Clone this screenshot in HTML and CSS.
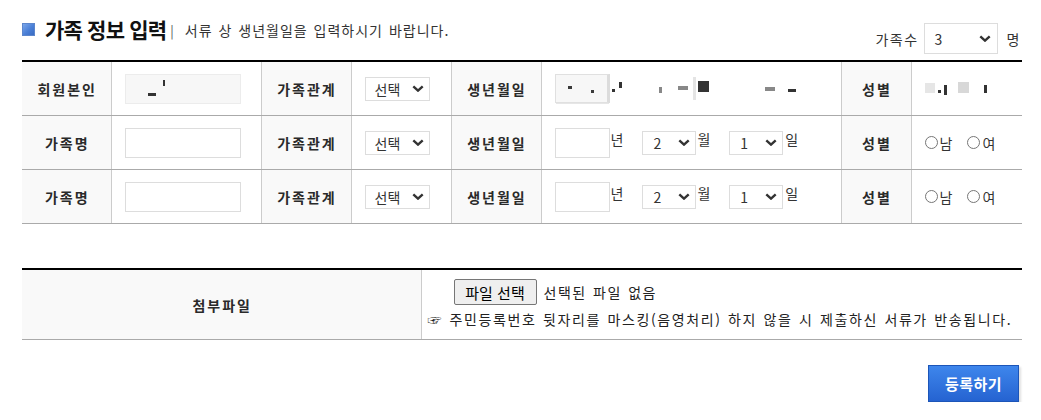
FILE: index.html
```html
<!DOCTYPE html>
<html lang="ko">
<head>
<meta charset="utf-8">
<title>가족 정보 입력</title>
<link rel="stylesheet" href="styles.css">
</head>
<body>
<div class="wrap">
  <div class="head">
    <h2 class="title">
      <span class="bullet"></span>
      <span class="title-text">가족 정보 입력</span>
      <span class="bar">|</span>
      <span class="sub">서류 상 생년월일을 입력하시기 바랍니다.</span>
    </h2>
    <div class="count">
      <span class="lbl">가족수</span>
      <span class="sel sel-count"><span>3</span><svg class="chev" width="12" height="7" viewBox="0 0 12 7"><polyline points="1.3,1.3 6,5.6 10.7,1.3" fill="none" stroke="#333" stroke-width="2.4"/></svg></span>
      <span class="lbl">명</span>
    </div>
  </div>

  <table class="fam">
    <colgroup>
      <col class="w89"><col class="w150"><col class="w90"><col class="w100"><col class="w90"><col class="w300"><col class="w70"><col class="w111">
    </colgroup>
    <tbody>
      <tr>
        <th>회원본인</th>
        <td><span class="inp inp-name ro"><i class="m m1"></i><i class="m m2"></i></span></td>
        <th>가족관계</th>
        <td><span class="sel sel-rel"><span>선택</span><svg class="chev" width="12" height="7" viewBox="0 0 12 7"><polyline points="1.3,1.3 6,5.6 10.7,1.3" fill="none" stroke="#333" stroke-width="2.4"/></svg></span></td>
        <th>생년월일</th>
        <td>
          <div class="redact">
            <span class="inp inp-year ro ro2"><i class="m m3"></i><i class="m m4"></i></span>
            <i class="m m5"></i><i class="m m6"></i>
            <i class="m m7"></i>
            <i class="m m8"></i><i class="m m9"></i><i class="m m10"></i>
            <i class="m m11"></i><i class="m m12"></i>
          </div>
        </td>
        <th>성별</th>
        <td>
          <div class="redact">
            <i class="m g1"></i><i class="m g2"></i><i class="m g3"></i><i class="m g4"></i><i class="m g5"></i>
          </div>
        </td>
      </tr>
      <tr>
        <th>가족명</th>
        <td><span class="inp inp-name"></span></td>
        <th>가족관계</th>
        <td><span class="sel sel-rel"><span>선택</span><svg class="chev" width="12" height="7" viewBox="0 0 12 7"><polyline points="1.3,1.3 6,5.6 10.7,1.3" fill="none" stroke="#333" stroke-width="2.4"/></svg></span></td>
        <th>생년월일</th>
        <td>
          <div class="birth">
            <span class="inp inp-year"></span><span class="unit">년</span>
            <span class="sel sel-date"><span>2</span><svg class="chev" width="12" height="7" viewBox="0 0 12 7"><polyline points="1.3,1.3 6,5.6 10.7,1.3" fill="none" stroke="#333" stroke-width="2.4"/></svg></span><span class="unit">월</span>
            <span class="sel sel-date"><span>1</span><svg class="chev" width="12" height="7" viewBox="0 0 12 7"><polyline points="1.3,1.3 6,5.6 10.7,1.3" fill="none" stroke="#333" stroke-width="2.4"/></svg></span><span class="unit">일</span>
          </div>
        </td>
        <th>성별</th>
        <td>
          <div class="gender">
            <span class="radio"></span><span class="rtxt">남</span>
            <span class="radio"></span><span class="rtxt">여</span>
          </div>
        </td>
      </tr>
      <tr>
        <th>가족명</th>
        <td><span class="inp inp-name"></span></td>
        <th>가족관계</th>
        <td><span class="sel sel-rel"><span>선택</span><svg class="chev" width="12" height="7" viewBox="0 0 12 7"><polyline points="1.3,1.3 6,5.6 10.7,1.3" fill="none" stroke="#333" stroke-width="2.4"/></svg></span></td>
        <th>생년월일</th>
        <td>
          <div class="birth">
            <span class="inp inp-year"></span><span class="unit">년</span>
            <span class="sel sel-date"><span>2</span><svg class="chev" width="12" height="7" viewBox="0 0 12 7"><polyline points="1.3,1.3 6,5.6 10.7,1.3" fill="none" stroke="#333" stroke-width="2.4"/></svg></span><span class="unit">월</span>
            <span class="sel sel-date"><span>1</span><svg class="chev" width="12" height="7" viewBox="0 0 12 7"><polyline points="1.3,1.3 6,5.6 10.7,1.3" fill="none" stroke="#333" stroke-width="2.4"/></svg></span><span class="unit">일</span>
          </div>
        </td>
        <th>성별</th>
        <td>
          <div class="gender">
            <span class="radio"></span><span class="rtxt">남</span>
            <span class="radio"></span><span class="rtxt">여</span>
          </div>
        </td>
      </tr>
    </tbody>
  </table>

  <table class="file">
    <colgroup><col class="w399"><col></colgroup>
    <tbody>
      <tr>
        <th>첨부파일</th>
        <td>
          <div class="file-line">
            <span class="file-btn">파일 선택</span>
            <span class="file-none">선택된 파일 없음</span>
          </div>
          <p class="note">☞ 주민등록번호 뒷자리를 마스킹(음영처리) 하지 않을 시 제출하신 서류가 반송됩니다.</p>
        </td>
      </tr>
    </tbody>
  </table>

  <div class="actions">
    <span class="btn-submit">등록하기</span>
  </div>
</div>
</body>
</html>
```

FILE: styles.css
```css
html, body {
  margin: 0;
  padding: 0;
  background: #fff;
}
body {
  font-family: "Noto Sans CJK KR", "Noto Sans", sans-serif;
  color: #333;
  font-size: 14px;
}
.wrap {
  width: 1000px;
  padding-left: 22px;
}

/* header */
.head {
  height: 60px;
  display: flex;
  justify-content: space-between;
}
.title {
  margin: 0;
  padding-top: 15px;
  display: flex;
  align-items: center;
  height: 28px;
  font-weight: normal;
}
.bullet {
  width: 13px;
  height: 13px;
  box-sizing: border-box;
  background: linear-gradient(135deg, #7aa6ea 0%, #4a7fd6 55%, #3a6bc2 100%);
  border: 1px solid #5c86cc;
  margin-right: 10px;
}
.title-text {
  font-size: 21px;
  font-weight: 700;
  color: #111;
  letter-spacing: -0.8px;
  line-height: 28px;
}
.bar {
  font-size: 13px;
  color: #555;
  margin: 3px 11px 0 4px;
}
.sub {
  font-size: 14px;
  color: #333;
  margin-top: 2px;
  letter-spacing: 1px;
  word-spacing: 1px;
}
.count {
  align-self: flex-end;
  margin-bottom: 6px;
  margin-right: 1px;
  display: flex;
  align-items: center;
}
.count .lbl {
  font-size: 14px;
  color: #333;
  letter-spacing: 1.5px;
}
.count .sel-count {
  margin: 0 9px 0 5px;
}

/* fake selects & inputs */
.sel {
  display: inline-flex;
  align-items: center;
  justify-content: space-between;
  box-sizing: border-box;
  border: 1px solid #ddd;
  background: #fff;
  font-size: 14px;
  color: #333;
  vertical-align: middle;
}
.chev {
  display: block;
}
.sel-rel {
  width: 65px;
  height: 24px;
  padding: 0 5px 0 9px;
}
.sel-date {
  width: 54px;
  height: 24px;
  padding: 0 5px 0 10px;
}
.sel-count {
  width: 74px;
  height: 31px;
  padding: 0 6px 0 10px;
}
.inp {
  display: inline-block;
  box-sizing: border-box;
  border: 1px solid #ddd;
  background: #fff;
  vertical-align: middle;
}
.inp-name {
  width: 116px;
  height: 30px;
}
.inp-year {
  width: 55px;
  height: 30px;
}
.ro {
  background: #f7f7f7;
  border-color: #ececec;
  display: inline-flex;
  align-items: center;
}
.ro2 {
  height: 29px;
  border: 1px solid #e0e0e0;
  border-right: 3px solid #dcdcdc;
  box-shadow: 0 2px 0 -1px #e6e6e6;
}

/* redaction marks */
.m {
  display: inline-block;
  background: #333;
}
.m1 { width: 8px; height: 3px; margin: 12px 0 0 22px; }
.m2 { width: 2px; height: 6px; margin: -12px 0 0 7px; }
.m3 { width: 4px; height: 3px; margin: -2px 0 0 12px; background: #3a3a3a; }
.m4 { width: 3px; height: 3px; margin: 6px 0 0 19px; background: #3a3a3a; }
.m5 { width: 3px; height: 3px; margin: 4px 0 0 2px; }
.m6 { width: 3px; height: 6px; margin: -8px 0 0 4px; }
.m7 { width: 3px; height: 6px; margin: 2px 0 0 37px; background: #888; }
.m8 { width: 10px; height: 4px; margin: -1px 0 0 16px; background: #888; }
.m9 { width: 3px; height: 23px; margin: 0 0 0 5px; background: #e4e4e4; }
.m10 { width: 11px; height: 11px; margin: -4px 0 0 2px; background: #333; }
.m11 { width: 10px; height: 4px; margin: 1px 0 0 56px; background: #888; }
.m12 { width: 8px; height: 3px; margin: 4px 0 0 13px; background: #333; }
.g1 { width: 10px; height: 10px; background: #e6e6e6; margin-top: -2px; }
.g2 { width: 3px; height: 3px; margin: 6px 0 0 3px; background: #333; }
.g3 { width: 3px; height: 10px; margin: 2px 0 0 3px; background: #333; }
.g4 { width: 11px; height: 11px; margin: -2px 0 0 11px; background: #d8d8d8; }
.g5 { width: 3px; height: 8px; margin: 0 0 0 15px; background: #333; }
.redact {
  display: flex;
  align-items: center;
}

/* table */
.fam,
.file {
  width: 1000px;
  table-layout: fixed;
  border-collapse: collapse;
  border-top: 2px solid #000;
}
.fam th,
.fam td,
.file th,
.file td {
  height: 53px;
  padding: 0;
  border-bottom: 1px solid #aaa;
  border-left: 1px solid #ccc;
  border-right: 1px solid #ccc;
}
.fam tr > :first-child,
.file tr > :first-child {
  border-left: 0;
}
.fam tr > :last-child,
.file tr > :last-child {
  border-right: 0;
}
.fam th,
.file th {
  background: #f9f9f9;
  font-size: 14px;
  font-weight: 700;
  color: #2a2a2a;
  letter-spacing: 2px;
  text-indent: 2px;
  text-align: center;
}
.fam td {
  padding-left: 13px;
  text-align: left;
}
.w89 { width: 89px; }
.w150 { width: 150px; }
.w90 { width: 90px; }
.w100 { width: 100px; }
.w70 { width: 70px; }
.w300 { width: 300px; }
.w111 { width: 111px; }
.w399 { width: 399px; }

.birth {
  display: flex;
  align-items: center;
}
.unit {
  font-size: 14px;
  color: #333;
  margin: -7px 19px 0 1px;
  line-height: 18px;
}
.unit:last-child {
  margin-right: 0;
  margin-left: 2px;
}

.gender {
  display: flex;
  align-items: center;
}
.radio {
  width: 13px;
  height: 13px;
  box-sizing: border-box;
  border: 1px solid #767676;
  border-radius: 50%;
  background: #fff;
}
.rtxt {
  font-size: 14px;
  color: #333;
  margin: 0 15px 0 2px;
}

/* file section */
.file {
  margin-top: 44px;
}
.file th,
.file td {
  height: 69px;
}
.file td {
  padding: 0 0 0 6px;
  vertical-align: top;
}
.file-line {
  display: flex;
  align-items: center;
  padding: 9px 0 0 26px;
}
.file-btn {
  box-sizing: border-box;
  width: 83px;
  height: 26px;
  display: inline-flex;
  align-items: center;
  justify-content: center;
  border: 1px solid #767676;
  border-radius: 2px;
  background: #efefef;
  font-size: 15px;
  color: #000;
}
.file-none {
  font-size: 14px;
  color: #222;
  margin-left: 7px;
  letter-spacing: 1.5px;
  word-spacing: 1px;
}
.note {
  margin: 3px 0 0 0;
  font-size: 14px;
  color: #222;
  line-height: 22px;
  letter-spacing: 1.6px;
  word-spacing: 1px;
}

/* submit */
.actions {
  display: flex;
  justify-content: flex-end;
  margin-top: 25px;
  padding-right: 3px;
}
.btn-submit {
  box-sizing: border-box;
  width: 91px;
  height: 37px;
  display: inline-flex;
  align-items: center;
  justify-content: center;
  background: linear-gradient(#3e86ec, #2563d1);
  border: 1px solid #1c55b8;
  color: #fff;
  font-size: 15px;
  font-weight: 700;
  letter-spacing: 0.5px;
  box-shadow: 2px 2px 2px rgba(0, 0, 0, 0.12);
}
```
